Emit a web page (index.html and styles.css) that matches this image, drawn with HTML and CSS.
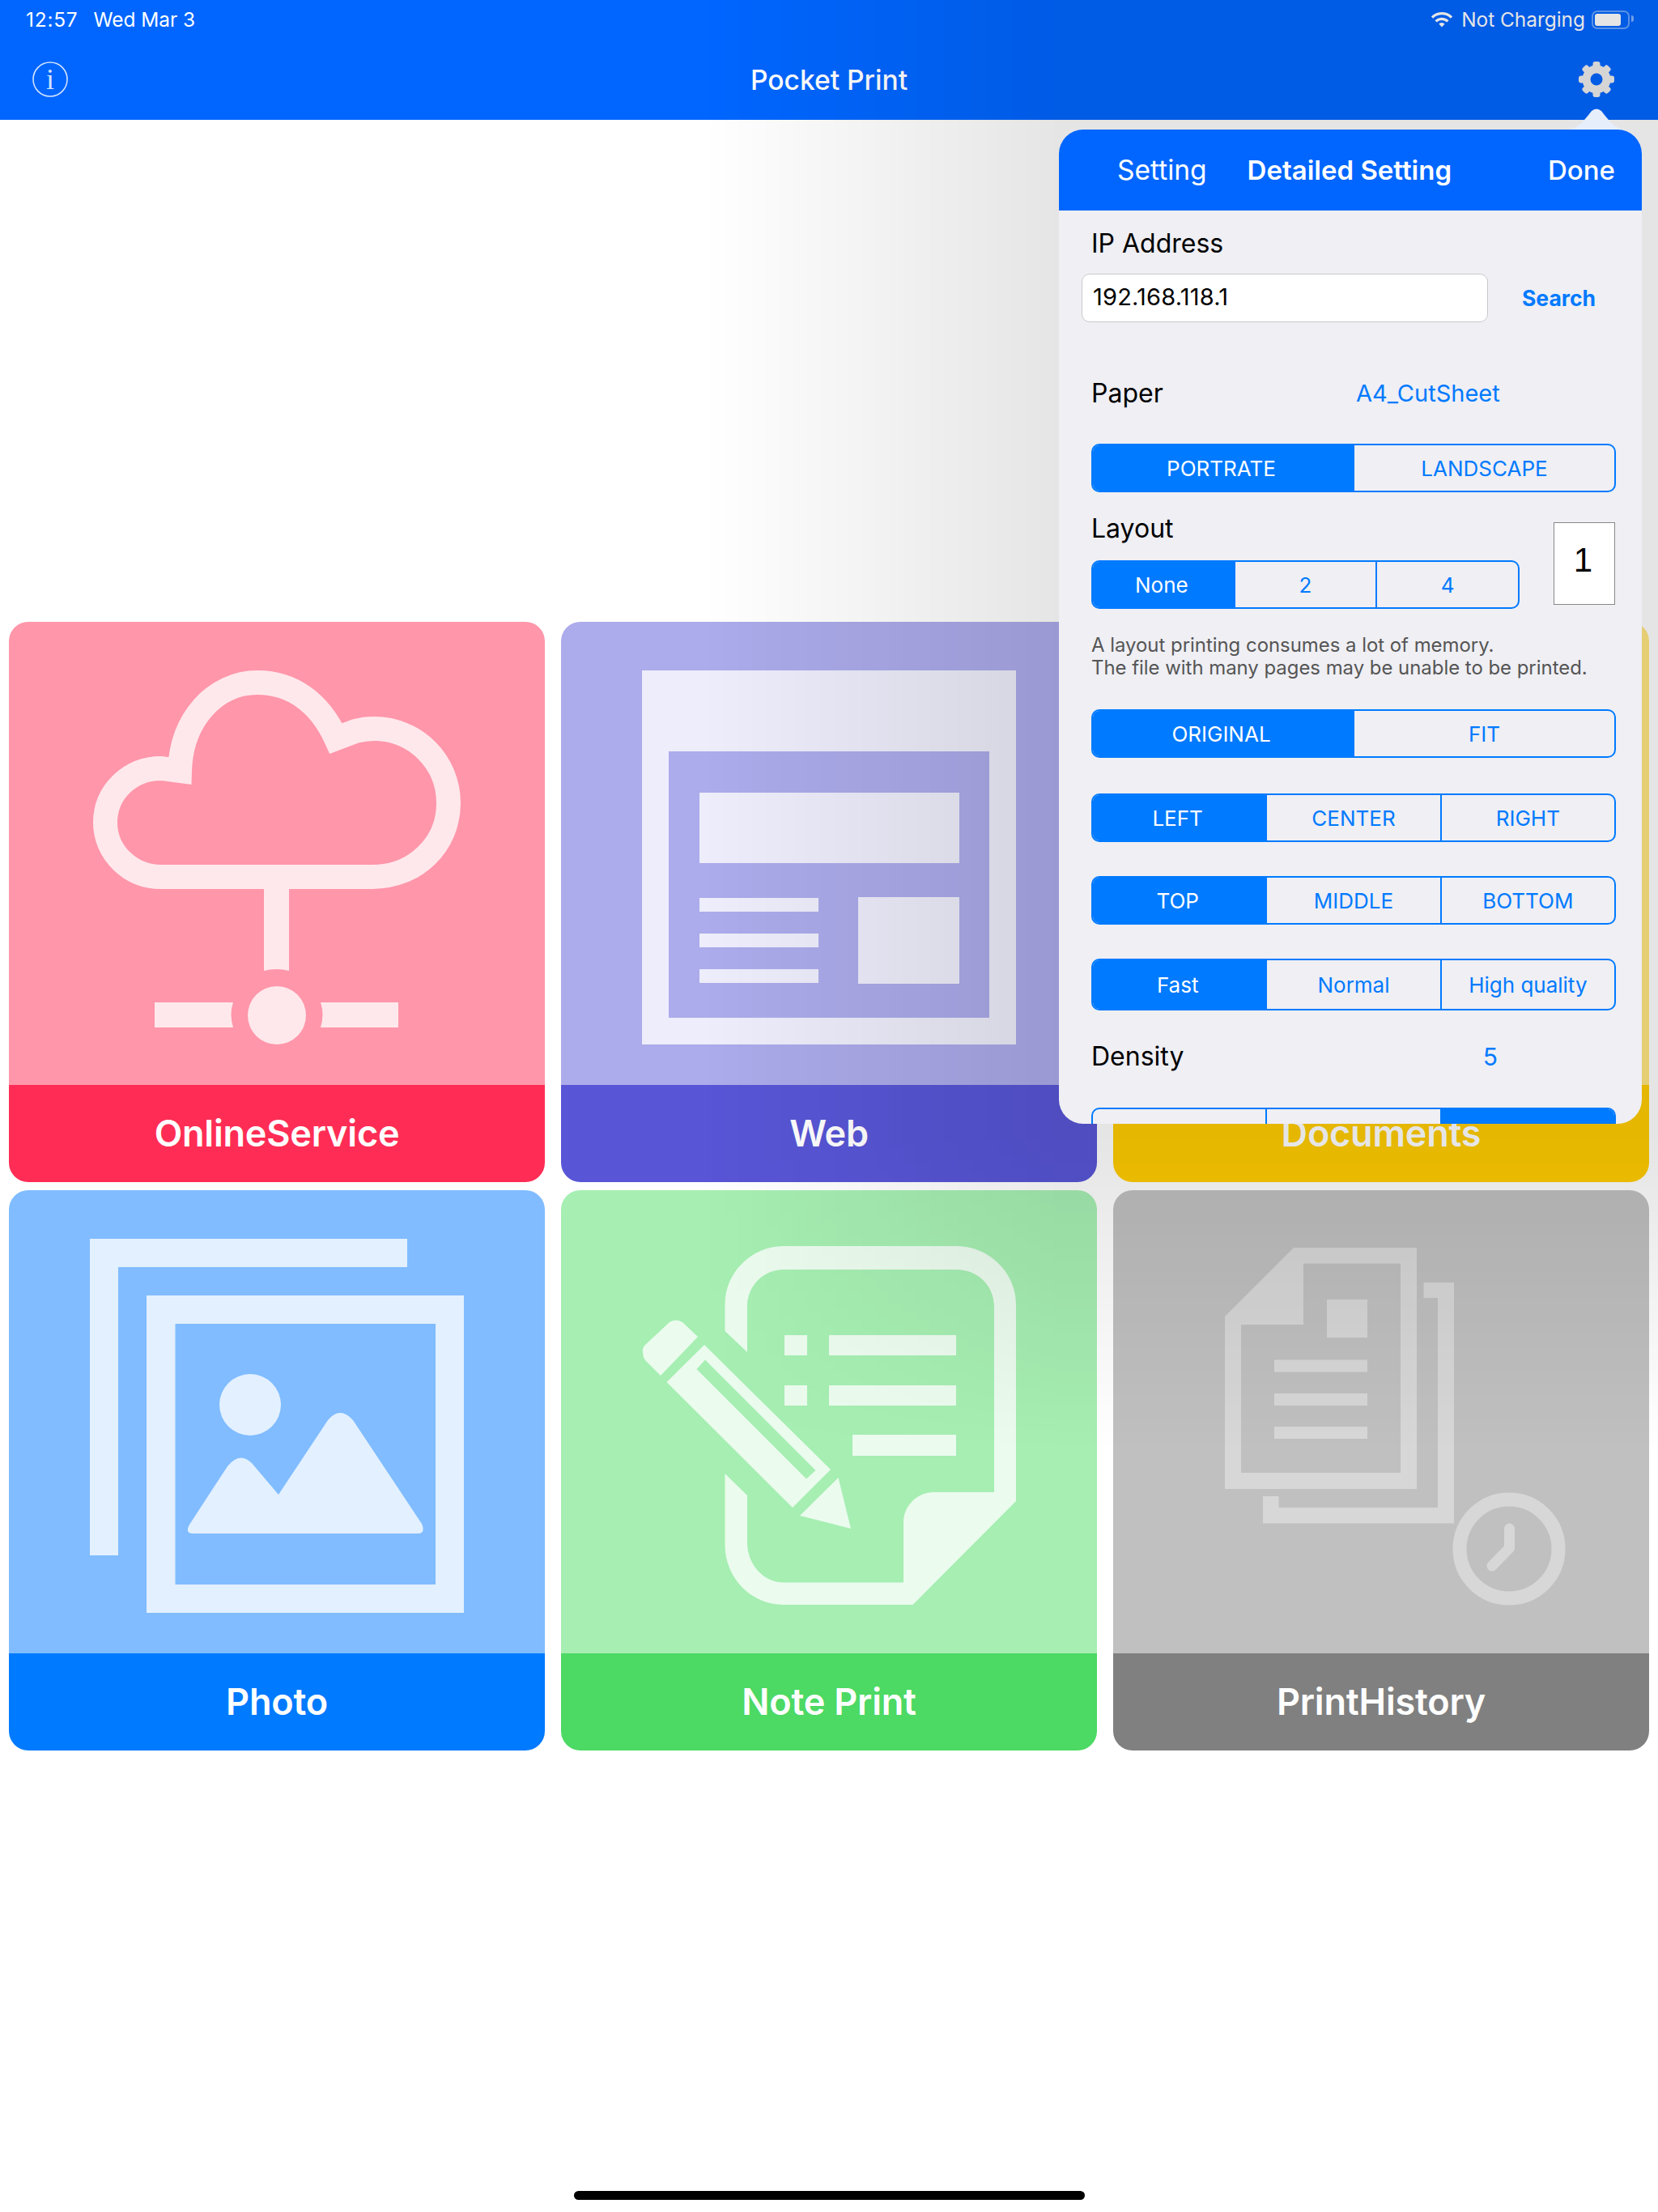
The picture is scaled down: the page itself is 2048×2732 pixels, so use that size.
FILE: index.html
```html
<!DOCTYPE html>
<html lang="en">
<head>
    <meta charset="UTF-8">
    <title>Pocket Print</title>
    <link rel="stylesheet" href="styles.css">
</head>
<body>
<div class="app">
    <header class="topbar">
        <div class="status">
            <span class="time">12:57</span>
            <span>Wed Mar 3</span>
            <div class="status-right">
                <svg class="wifi" viewBox="0 0 28 20"><path class="wifi-arc" d="M2 7.6A17 17 0 0 1 26 7.6"/><path class="wifi-arc" d="M6.6 12.4A10.5 10.5 0 0 1 21.4 12.4"/><path class="wifi-dot" d="M10.4 15.6L14 19.6L17.6 15.6A5.4 5.4 0 0 0 10.4 15.6Z"/></svg>
                <span>Not Charging</span>
                <div class="battery"><div class="battery-fill"></div></div>
            </div>
        </div>
        <div class="nav">
            <svg class="info" viewBox="0 0 44 44"><circle class="info-ring" cx="22" cy="22" r="21"/><text class="info-i" x="22" y="34" text-anchor="middle">i</text></svg>
            <div class="nav-title">Pocket Print</div>
            <svg class="gear" viewBox="0 0 44 44">
                <circle class="gear-ring" cx="22" cy="22" r="12.5"/>
                <g class="gear-teeth">
                    <rect x="17.5" y="0" width="9" height="9" rx="3"/>
                    <rect x="17.5" y="0" width="9" height="9" rx="3" transform="rotate(45 22 22)"/>
                    <rect x="17.5" y="0" width="9" height="9" rx="3" transform="rotate(90 22 22)"/>
                    <rect x="17.5" y="0" width="9" height="9" rx="3" transform="rotate(135 22 22)"/>
                    <rect x="17.5" y="0" width="9" height="9" rx="3" transform="rotate(180 22 22)"/>
                    <rect x="17.5" y="0" width="9" height="9" rx="3" transform="rotate(225 22 22)"/>
                    <rect x="17.5" y="0" width="9" height="9" rx="3" transform="rotate(270 22 22)"/>
                    <rect x="17.5" y="0" width="9" height="9" rx="3" transform="rotate(315 22 22)"/>
                </g>
            </svg>
        </div>
    </header>

    <main class="grid">
        <div class="card card-red">
            <div class="card-image">
                <svg class="icon" viewBox="0 0 662 572">
                    <path class="icon-line" d="M188 315C150 315 119 285 119 248C119 210 150 181 188 181L211 184C213 120 255 75 307 75C350 75 384 100 404 144L428 135C436 133 444 132 451 132C502 132 543 173 543 224C543 275 502 315 449 315Z"/>
                    <path d="M315 330H346V431Q331 427 315 431Z"/>
                    <circle cx="331" cy="486" r="36"/>
                    <path d="M180 470H277Q272 485 277 501H180Z"/>
                    <path d="M385 470H481V501H385Q390 485 385 470Z"/>
                </svg>
            </div>
            <div class="card-label">OnlineService</div>
        </div>
        <div class="card card-indigo">
            <div class="card-image">
                <svg class="icon" viewBox="0 0 662 572">
                    <path fill-rule="evenodd" d="M100 60H562V522H100ZM133 160V489H529V160Z"/>
                    <rect x="171" y="211" width="321" height="87"/>
                    <rect x="171" y="341" width="147" height="17"/>
                    <rect x="171" y="385" width="147" height="17"/>
                    <rect x="171" y="429" width="147" height="17"/>
                    <rect x="367" y="340" width="125" height="107"/>
                </svg>
            </div>
            <div class="card-label">Web</div>
        </div>
        <div class="card card-yellow">
            <div class="card-image"></div>
            <div class="card-label">Documents</div>
        </div>
        <div class="card card-blue">
            <div class="card-image">
                <svg class="icon" viewBox="0 0 662 572">
                    <path d="M100 60H492V95H135V451H100Z"/>
                    <path fill-rule="evenodd" d="M170 130H562V522H170ZM205.500 165V487H527V165Z"/>
                    <circle cx="298" cy="265" r="38"/>
                    <path d="M228 424Q217 424 223 413L270 341Q285 322 300 337L333 376L394 284Q409 266 425 284L510 412Q515 424 505 424Z"/>
                </svg>
            </div>
            <div class="card-label">Photo</div>
        </div>
        <div class="card card-green">
            <div class="card-image">
                <svg class="icon" viewBox="0 0 662 572">
                    <path d="M202.500 174V141C202.500 102 235 69 275 69H488C529 69 562 102 562 141V384L434.500 512H275C235 512 202.500 479 202.500 438V350L230 377V435C230 462 250 484.500 275 484.500H423V410C423 390 440 373 460 373H535V144C535 118 515 98 488 98H275C250 98 230 118 230 144V200Z"/>
                    <rect x="276" y="179" width="28" height="25"/>
                    <rect x="276" y="241" width="28" height="25"/>
                    <rect x="331" y="179" width="157" height="25"/>
                    <rect x="331" y="241" width="157" height="25"/>
                    <rect x="360" y="302" width="128" height="26"/>
                    <path d="M101 201Q100 195 104 191L134 163Q142 158 150 163L169 181L123 229L104 210Q101 206 101 201Z"/>
                    <path fill-rule="evenodd" d="M177 191L333 345L286 392L130.500 237ZM178 209.500L167.500 221L303 356.500L314.500 346Z"/>
                    <path d="M342.500 355L358 418L295 402Z"/>
                </svg>
            </div>
            <div class="card-label">Note Print</div>
        </div>
        <div class="card card-gray">
            <div class="card-image">
                <svg class="icon icon-faint" viewBox="0 0 662 572">
                    <path fill-rule="evenodd" d="M223 71H375V369H138V156ZM235 90.500V166H158V349H355V90.500Z"/>
                    <rect x="264" y="135" width="50" height="47"/>
                    <rect x="199" y="209.500" width="115" height="15"/>
                    <rect x="199" y="251" width="115" height="15"/>
                    <rect x="199" y="292" width="115" height="15"/>
                    <path d="M383.500 114H421V411.500H185V378H204.500V392H401V133H383.500Z"/>
                    <circle class="icon-line icon-clock" cx="489" cy="443" r="61"/>
                    <path class="icon-hand" d="M489.500 418V442L468 464"/>
                </svg>
            </div>
            <div class="card-label">PrintHistory</div>
        </div>
    </main>

    <div class="home-bar"></div>

    <!-- dimming behind the popover -->
    <div class="dim"></div>

    <svg class="popover-arrow" viewBox="0 0 72 28"><path d="M0 26C12 26 20 16 30 3Q36 -2 42 3C52 16 60 26 72 26Z"/></svg>

    <section class="popover">
        <div class="pop-head">
            <span class="pop-tab">Setting</span>
            <span class="pop-tab pop-tab-active">Detailed Setting</span>
            <span class="pop-done">Done</span>
        </div>
        <div class="pop-body">
            <div class="row-label row-ip">IP Address</div>
            <div class="ip-row">
                <div class="ip-input">192.168.118.1</div>
                <div class="ip-search">Search</div>
            </div>

            <div class="row-label row-paper">
                <span class="paper-name">Paper</span>
                <span class="row-value">A4_CutSheet</span>
            </div>
            <div class="seg seg-orient">
                <span class="seg-item on">PORTRATE</span>
                <span class="seg-item">LANDSCAPE</span>
            </div>

            <div class="layout-row">
                <div class="layout-left">
                    <div class="row-label">Layout</div>
                    <div class="seg seg-layout">
                        <span class="seg-item on">None</span>
                        <span class="seg-item">2</span>
                        <span class="seg-item">4</span>
                    </div>
                </div>
                <div class="layout-num">1</div>
            </div>

            <p class="note">A layout printing consumes a lot of memory.<br>The file with many pages may be unable to be printed.</p>

            <div class="seg seg-fit">
                <span class="seg-item on">ORIGINAL</span>
                <span class="seg-item">FIT</span>
            </div>
            <div class="seg seg-h">
                <span class="seg-item on">LEFT</span>
                <span class="seg-item">CENTER</span>
                <span class="seg-item">RIGHT</span>
            </div>
            <div class="seg seg-v">
                <span class="seg-item on">TOP</span>
                <span class="seg-item">MIDDLE</span>
                <span class="seg-item">BOTTOM</span>
            </div>
            <div class="seg seg-quality">
                <span class="seg-item on">Fast</span>
                <span class="seg-item">Normal</span>
                <span class="seg-item">High quality</span>
            </div>

            <div class="row-label row-density">
                <span>Density</span>
                <span class="density-value">5</span>
            </div>
            <div class="seg seg-last">
                <span class="seg-item"></span>
                <span class="seg-item"></span>
                <span class="seg-item on"></span>
            </div>
        </div>
    </section>
</div>
</body>
</html>
```

FILE: styles.css
```css
/* base */
body {
    margin: 0;
    background-color: #fff;
    font-family: Inter, "Liberation Sans", sans-serif;
}
.app {
    position: relative;
    display: flex;
    flex-direction: column;
    width: 2048px;
    height: 2732px;
    overflow: hidden;
}

/* top bar */
.topbar {
    background-color: #0066ff;
    color: #fff;
    height: 148px;
}
.status {
    display: flex;
    align-items: center;
    height: 48px;
    padding: 0 30px 0 32px;
    font-size: 24.4px;
}
.time {
    margin-right: 19px;
    letter-spacing: 0.8px;
}
.status-right {
    display: flex;
    align-items: center;
    margin-left: auto;
}
.wifi {
    width: 28px;
    height: 20px;
    margin-right: 10px;
}
.wifi-arc {
    fill: none;
    stroke: #fff;
    stroke-width: 3.4;
}
.wifi-dot {
    fill: #fff;
}
.battery {
    position: relative;
    box-sizing: border-box;
    width: 47px;
    height: 23px;
    margin-left: 8px;
    margin-right: 5px;
    padding: 2px;
    border: 2px solid rgba(255, 255, 255, 0.4);
    border-radius: 7px;
}
.battery::after {
    content: "";
    position: absolute;
    right: -7px;
    top: 4px;
    width: 3px;
    height: 8px;
    border-radius: 0 3px 3px 0;
    background-color: rgba(255, 255, 255, 0.5);
}
.battery-fill {
    width: 32px;
    height: 15px;
    border-radius: 3px;
    background-color: #fff;
}
.nav {
    display: grid;
    grid-template-columns: 1fr auto 1fr;
    align-items: center;
    height: 100px;
    padding: 0 54px;
}
.nav-title {
    font-size: 33.600px;
    font-weight: 500;
}
.info {
    width: 44px;
    height: 44px;
    margin-left: -14px;
}
.info-ring {
    fill: none;
    stroke: #d2e2ff;
    stroke-width: 1.6;
}
.info-i {
    fill: #d2e2ff;
    font-family: "Liberation Serif", serif;
    font-size: 36px;
}
.gear {
    width: 44px;
    height: 44px;
    justify-self: end;
}
.gear-ring {
    fill: none;
    stroke: #eee;
    stroke-width: 10;
}
.gear-teeth {
    fill: #eee;
}

/* card grid */
.grid {
    display: grid;
    grid-template-columns: repeat(3, 662px);
    column-gap: 20px;
    row-gap: 10px;
    padding: 620px 11px 0;
}
.card {
    height: 692px;
    border-radius: 24px;
    overflow: hidden;
}
.card-image {
    height: 572px;
}
.card-label {
    height: 120px;
    line-height: 120px;
    text-align: center;
    color: #fff;
    font-size: 45px;
    font-weight: 600;
    letter-spacing: -0.2px;
}
.card-red .card-image { background-color: #ff96aa; }
.card-red .card-label { background-color: #ff2d55; }
.card-indigo .card-image { background-color: #acabeb; }
.card-indigo .card-label { background-color: #5856d6; }
.card-yellow .card-image { background-color: #ffe680; }
.card-yellow .card-label { background-color: #ffcc00; }
.card-blue .card-image { background-color: #80bcff; }
.card-blue .card-label { background-color: #007aff; }
.card-green .card-image { background-color: #a6eeb2; }
.card-green .card-label { background-color: #4cd964; }
.card-gray .card-image { background-color: #c0c0c0; }
.card-gray .card-label { background-color: #808080; }

.icon {
    display: block;
    width: 662px;
    height: 572px;
    fill: rgba(255, 255, 255, 0.78);
}
.icon-faint {
    fill: rgba(255, 255, 255, 0.36);
}
.icon-line {
    fill: none;
    stroke: rgba(255, 255, 255, 0.78);
    stroke-width: 30;
}
.icon-clock {
    stroke: rgba(255, 255, 255, 0.36);
    stroke-width: 17;
}
.icon-hand {
    fill: none;
    stroke: rgba(255, 255, 255, 0.36);
    stroke-width: 13;
    stroke-linecap: round;
    stroke-linejoin: round;
}

.home-bar {
    width: 631px;
    height: 11px;
    margin: auto auto 15px;
    border-radius: 6px;
    background-color: #000;
}

/* dim layer, lies over the page and under the popover */
.dim {
    position: absolute;
    inset: 0;
    background: linear-gradient(to right, rgba(0, 0, 0, 0) 870px, rgba(0, 0, 0, 0.1) 1310px);
    -webkit-mask-image: linear-gradient(to bottom, #000 1400px, transparent 1790px);
    mask-image: linear-gradient(to bottom, #000 1400px, transparent 1790px);
}

/* popover */
.popover-arrow {
    position: absolute;
    left: 1936px;
    top: 134px;
    width: 72px;
    height: 28px;
    fill: #e6eefb;
}
.popover {
    position: absolute;
    left: 1308px;
    top: 160px;
    width: 720px;
    height: 1228px;
    border-radius: 30px;
    overflow: hidden;
    background-color: #efeff4;
}
.pop-head {
    display: flex;
    align-items: center;
    height: 100px;
    padding: 0 33px 0 72px;
    background-color: #0066ff;
    color: #fff;
    font-size: 33.500px;
}
.pop-tab-active {
    margin-left: 50px;
    font-size: 33px;
    font-weight: 600;
}
.pop-done {
    margin-left: auto;
    font-size: 33px;
    font-weight: 500;
}
.pop-body {
    padding: 0 32px 0 40px;
}
.row-label {
    height: 40px;
    line-height: 40px;
    font-size: 32px;
    color: #000;
}
.row-ip {
    margin-top: 21px;
}
.ip-row {
    display: flex;
    align-items: center;
    margin: 17px 0 0 -12px;
}
.ip-input {
    box-sizing: border-box;
    width: 502px;
    height: 60px;
    line-height: 56px;
    padding-left: 13px;
    border: 1px solid #c8c8cc;
    border-radius: 10px;
    background-color: #fff;
    font-size: 29px;
    letter-spacing: 0.2px;
    color: #000;
}
.ip-search {
    margin-left: 42px;
    color: #007aff;
    font-size: 26.500px;
    font-weight: 700;
}
.row-paper {
    display: flex;
    margin-top: 68px;
}
.paper-name {
    width: 327px;
}
.row-value {
    color: #007aff;
    font-size: 29px;
}

/* segmented controls */
.seg {
    display: flex;
    box-sizing: border-box;
    height: 60px;
    border: 2px solid #007aff;
    border-radius: 10px;
    overflow: hidden;
    color: #007aff;
    font-size: 26px;
}
.seg-item {
    flex: 1 1 0;
    display: flex;
    align-items: center;
    justify-content: center;
    border-left: 2px solid #007aff;
}
.seg-item:first-child {
    border-left: none;
}
.seg-item.on {
    text-indent: -4px;
    background-color: #007aff;
    color: #fff;
}
.seg-orient {
    margin-top: 42px;
}
.layout-row {
    display: flex;
    margin-top: 25px;
}
.layout-left {
    width: 529px;
}
.seg-layout {
    margin-top: 19px;
}
.layout-num {
    box-sizing: border-box;
    width: 76px;
    height: 102px;
    line-height: 92px;
    margin: 12px 0 0 42px;
    padding-right: 3px;
    border: 1px solid #888;
    background-color: #fff;
    text-align: center;
    font-family: "Liberation Sans", sans-serif;
    font-size: 42px;
    color: #000;
}
.note {
    margin: 31px 0 0;
    font-size: 23.900px;
    line-height: 28px;
    color: #555;
}
.seg-fit {
    margin-top: 37px;
}
.seg-h {
    margin-top: 44px;
}
.seg-v,
.seg-quality {
    margin-top: 42px;
}
.seg-quality {
    height: 64px;
}
.row-density {
    display: flex;
    margin-top: 37px;
}
.density-value {
    margin-left: auto;
    margin-right: 146px;
    color: #007aff;
    font-size: 30px;
}
.seg-last {
    margin-top: 43px;
}
```
